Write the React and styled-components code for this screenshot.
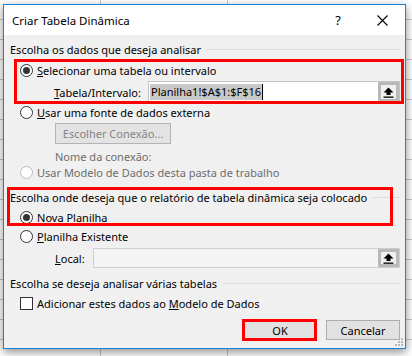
import React from 'react';
import styled, { createGlobalStyle } from 'styled-components';

const GlobalStyle = createGlobalStyle`
    html, body {
        margin: 0;
        padding: 0;
    }
    body {
        width: 412px;
        height: 356px;
        overflow: hidden;
        background: #fff;
        font-family: "Noto Sans", "Open Sans", sans-serif;
    }
`;

const ArrowUp = () => (
    <svg width="11" height="11" viewBox="0 0 11 11">
        <path d="M5.5 0.5 L0.5 5.5 H3.5 V8 H7.5 V5.5 H10.5 Z" fill="#000" />
        <rect x="0.5" y="9.5" width="10" height="1.3" fill="#000" />
    </svg>
);

const CloseIcon = () => (
    <svg width="11" height="11" viewBox="0 0 11 11">
        <path d="M0.5 0.5 L10.5 10.5 M10.5 0.5 L0.5 10.5" stroke="#000" strokeWidth="1.1" />
    </svg>
);

const Grip = () => (
    <svg width="8" height="8" viewBox="0 0 8 8">
        <g fill="#b8b8b8">
            <rect x="6" y="0" width="2" height="2" />
            <rect x="3" y="3" width="2" height="2" />
            <rect x="6" y="3" width="2" height="2" />
            <rect x="0" y="6" width="2" height="2" />
            <rect x="3" y="6" width="2" height="2" />
            <rect x="6" y="6" width="2" height="2" />
        </g>
    </svg>
);

const Section = ({ mt, children }) => <SectionHeader $mt={mt}>{children}</SectionHeader>;

const Option = ({ checked, disabled, children, mt }) => (
    <OptionRow $mt={mt} $disabled={disabled}>
        <Radio $checked={checked} $disabled={disabled} />
        <span>{children}</span>
    </OptionRow>
);

const RefField = ({ value, disabled }) => (
    <Field $disabled={disabled}>
        <FieldValue>
            {value && <Selection>{value}</Selection>}
            {value && <Caret />}
        </FieldValue>
        <Picker>
            <ArrowUp />
        </Picker>
    </Field>
);

const App = () => {
    return (
        <Sheet>
            <GlobalStyle />
            <Dialog>
                <TitleBar>
                    <Title>Criar Tabela Dinâmica</Title>
                    <TitleButton $w={30}>?</TitleButton>
                    <TitleButton $w={46}>
                        <CloseIcon />
                    </TitleButton>
                </TitleBar>
                <Body>
                    <Section mt={6}>Escolha os dados que deseja analisar</Section>
                    <Highlight $mt={5} $inset="-3px -4px -1px 4px">
                        <Option checked>
                            <u>S</u>elecionar uma tabela ou intervalo
                        </Option>
                        <FieldRow $mt={3} $h={22} $indent={44}>
                            <FieldLabel $w={94}>
                                <u>T</u>abela/Intervalo:
                            </FieldLabel>
                            <RefField value="Planilha1!$A$1:$F$16" />
                        </FieldRow>
                    </Highlight>
                    <Option mt={1}>
                        <u>U</u>sar uma fonte de dados externa
                    </Option>
                    <Indented $mt={3}>
                        <Button $w={116} $h={21} disabled>
                            Escolher Conexão...
                        </Button>
                    </Indented>
                    <Indented $mt={4} $muted>
                        Nome da conexão:
                    </Indented>
                    <Option disabled>Usar Modelo de Dados desta pasta de trabalho</Option>
                    <Highlight $mt={9} $inset="-2px 7px -1px -3px">
                        <Section>Escolha onde deseja que o relatório de tabela dinâmica seja colocado</Section>
                        <Option checked mt={4}>
                            <u>N</u>ova Planilha
                        </Option>
                    </Highlight>
                    <Option mt={3}>
                        <u>P</u>lanilha Existente
                    </Option>
                    <FieldRow $mt={4} $h={20} $indent={45}>
                        <FieldLabel $w={38}>
                            <u>L</u>ocal:
                        </FieldLabel>
                        <RefField disabled />
                    </FieldRow>
                    <Section mt={7}>Escolha se deseja analisar várias tabelas</Section>
                    <OptionRow $mt={4}>
                        <Check />
                        <span>
                            Adicionar estes dados ao <u>M</u>odelo de Dados
                        </span>
                    </OptionRow>
                    <Footer>
                        <Highlight $inset="-1px 0 -1px -1px">
                            <Button $w={74} $h={20}>OK</Button>
                        </Highlight>
                        <Button $w={74} $h={20}>Cancelar</Button>
                    </Footer>
                </Body>
                <GripCorner>
                    <Grip />
                </GripCorner>
            </Dialog>
        </Sheet>
    );
};

export default App;

const Sheet = styled.div`
    width: 412px;
    height: 356px;
    box-sizing: border-box;
    padding: 4px 6px 0 3px;
    overflow: hidden;
    background-color: #fff;
    background-image: linear-gradient(
            to right,
            transparent 100px,
            #c6c6c6 100px,
            #c6c6c6 101px,
            transparent 101px,
            transparent 227px,
            #c6c6c6 227px,
            #c6c6c6 228px,
            transparent 228px
        ),
        repeating-linear-gradient(to bottom, transparent 0, transparent 19px, #c6c6c6 19px, #c6c6c6 20px);
`;

const Dialog = styled.div`
    position: relative;
    width: 403px;
    height: 345px;
    box-sizing: border-box;
    border: 1px solid #1883d7;
    background: #f0f0f0;
    box-shadow: 0 3px 9px rgba(0, 0, 0, 0.45);
    display: flex;
    flex-direction: column;
    font-size: 11px;
    color: #000;
`;

const TitleBar = styled.div`
    height: 30px;
    flex: none;
    background: #fff;
    display: flex;
    align-items: center;
    padding-left: 8px;
`;

const Title = styled.div`
    flex: 1;
    font-size: 11.5px;
    padding-top: 1px;
`;

const TitleButton = styled.div`
    width: ${(p) => p.$w}px;
    height: 30px;
    margin-left: 6px;
    display: flex;
    align-items: center;
    justify-content: center;
    font-size: 13px;
`;

const Body = styled.div`
    flex: 1;
    display: flex;
    flex-direction: column;
    padding: 0 5px 0 6px;
`;

const SectionHeader = styled.div`
    height: 16px;
    margin-top: ${(p) => p.$mt || 0}px;
    display: flex;
    align-items: center;
    white-space: nowrap;

    &::after {
        content: '';
        flex: 1;
        height: 1px;
        margin-left: 6px;
        background: #dcdcdc;
    }
`;

const Highlight = styled.div`
    position: relative;
    display: flex;
    flex-direction: column;
    margin-top: ${(p) => p.$mt || 0}px;

    &::after {
        content: '';
        position: absolute;
        inset: ${(p) => p.$inset};
        border: 3px solid #f00;
        pointer-events: none;
    }
`;

const OptionRow = styled.div`
    height: 16px;
    margin-top: ${(p) => p.$mt || 0}px;
    padding-left: 10px;
    display: flex;
    align-items: center;
    gap: 4px;
    white-space: nowrap;
    color: ${(p) => (p.$disabled ? '#6d6d6d' : '#000')};
`;

const Radio = styled.span`
    width: 13px;
    height: 13px;
    box-sizing: border-box;
    border-radius: 50%;
    border: 1px solid ${(p) => (p.$disabled ? '#bcbcbc' : '#333')};
    background: ${(p) => (p.$disabled ? '#fcfcfc' : '#fff')};
    display: flex;
    align-items: center;
    justify-content: center;

    &::after {
        content: '';
        width: 7px;
        height: 7px;
        border-radius: 50%;
        background: #333;
        display: ${(p) => (p.$checked ? 'block' : 'none')};
    }
`;

const Check = styled.span`
    width: 13px;
    height: 13px;
    box-sizing: border-box;
    border: 1px solid #333;
    background: #fff;
`;

const FieldRow = styled.div`
    height: ${(p) => p.$h}px;
    margin-top: ${(p) => p.$mt || 0}px;
    padding-left: ${(p) => p.$indent}px;
    display: flex;
    align-items: center;
`;

const FieldLabel = styled.div`
    width: ${(p) => p.$w}px;
    flex: none;
    white-space: nowrap;
`;

const Field = styled.div`
    flex: 1;
    height: 100%;
    box-sizing: border-box;
    border: 1px solid ${(p) => (p.$disabled ? '#cfcfcf' : '#c4c4c4')};
    background: ${(p) => (p.$disabled ? '#f4f4f4' : '#fff')};
    display: flex;
`;

const FieldValue = styled.div`
    flex: 1;
    display: flex;
    align-items: center;
    padding-left: 1px;
`;

const Selection = styled.span`
    background: #c8c8c8;
    line-height: 16px;
    padding: 0 1px;
`;

const Caret = styled.span`
    width: 1px;
    height: 16px;
    background: #000;
`;

const Picker = styled.div`
    width: 21px;
    flex: none;
    box-sizing: border-box;
    border: 3px solid #b9b9b9;
    background: #f0f0f0;
    display: flex;
    align-items: center;
    justify-content: center;
`;

const Indented = styled.div`
    margin-top: ${(p) => p.$mt || 0}px;
    padding-left: 45px;
    height: ${(p) => (p.$muted ? '16px' : 'auto')};
    display: flex;
    align-items: center;
    color: ${(p) => (p.$muted ? '#6d6d6d' : '#000')};
`;

const Button = styled.button`
    width: ${(p) => p.$w}px;
    height: ${(p) => p.$h}px;
    box-sizing: border-box;
    padding: 0;
    font-family: inherit;
    font-size: 11px;
    color: #000;
    background: #e1e1e1;
    border: 1px solid #adadad;

    &:disabled {
        color: #838383;
        background: #e3e3e3;
        border-color: #b4b4b4;
    }
`;

const Footer = styled.div`
    margin-top: 9px;
    display: flex;
    justify-content: flex-end;
    gap: 9px;
`;

const GripCorner = styled.div`
    position: absolute;
    right: 2px;
    bottom: 2px;
    display: flex;
`;
